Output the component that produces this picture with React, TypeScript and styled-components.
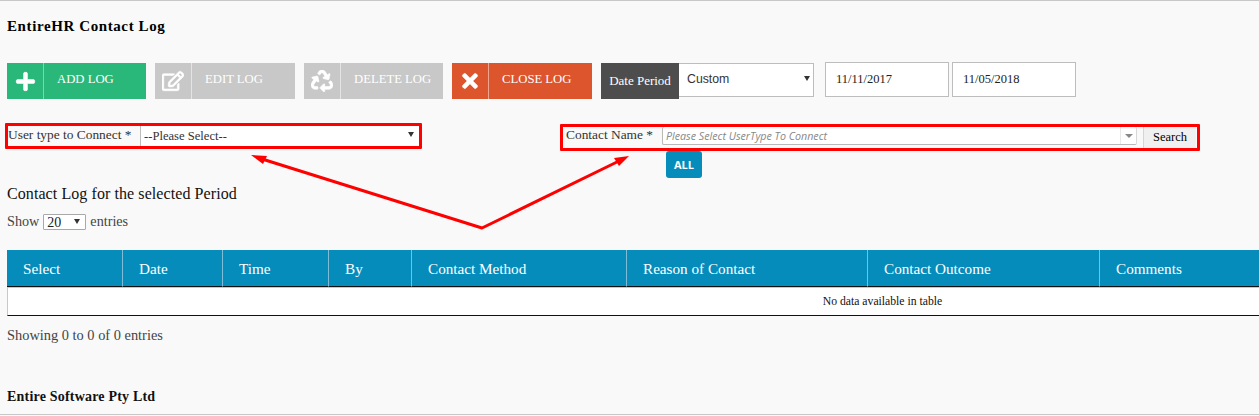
import React from "react";
import styled, { createGlobalStyle } from "styled-components";
import { FaPlus, FaRegEdit, FaRecycle, FaTimes } from "react-icons/fa";

const Global = createGlobalStyle`
  html, body { margin: 0; padding: 0; background: #f9f9f9; }
  body { font-family: "Liberation Serif", "Times New Roman", serif; color: #333; overflow: hidden; }
`;

const Page = styled.div`
  position: relative;
  width: 1259px;
  height: 415px;
  box-sizing: border-box;
  overflow: hidden;
  border-top: 1px solid #c8c8c8;
  border-bottom: 1px solid #c8c8c8;
  padding: 17px 0 0 7px;
`;

const Title = styled.h1`
  margin: 0;
  font-size: 15px;
  line-height: 17px;
  font-weight: bold;
  color: #000;
  letter-spacing: 0.6px;
`;

const Toolbar = styled.div`
  display: flex;
  align-items: flex-start;
  margin-top: 27px;
  height: 37px;
`;

const ActionButton = styled.div<{ $bg: string; $w: number; $line: string; $icon: number }>`
  display: flex;
  width: ${(p) => p.$w}px;
  height: 36px;
  margin-top: 1px;
  margin-right: 9px;
  background: ${(p) => p.$bg};
  color: #fff;
  font-size: 12.7px;
  flex: none;
  > span:first-child {
    width: 36px;
    flex: none;
    display: flex;
    align-items: center;
    justify-content: center;
    border-right: 1px solid ${(p) => p.$line};
    font-size: ${(p) => p.$icon}px;
    svg {
      stroke: currentColor;
      stroke-width: 14;
    }
  }
  > span:last-child {
    padding-left: 13px;
    line-height: 33px;
    white-space: nowrap;
  }
`;

const PeriodLabel = styled.div`
  width: 78px;
  height: 36px;
  margin-top: 1px;
  background: #4d4d4d;
  color: #fff;
  font-size: 13px;
  line-height: 35px;
  text-align: center;
  flex: none;
`;

const Caret = styled.div<{ $right: number; $size: number; $top: number }>`
  position: relative;
  display: flex;
  &::after {
    content: "";
    position: absolute;
    right: ${(p) => p.$right}px;
    top: ${(p) => p.$top}px;
    border-left: ${(p) => p.$size}px solid transparent;
    border-right: ${(p) => p.$size}px solid transparent;
    border-top: ${(p) => p.$size + 2}px solid #333;
    pointer-events: none;
  }
`;

const PeriodCaret = styled(Caret)`
  margin: 1px 11px 0 0;
  flex: none;
`;

const PeriodSelect = styled.select`
  appearance: none;
  width: 135px;
  height: 34px;
  box-sizing: border-box;
  border: 1px solid #bdbdbd;
  border-left: 0;
  border-radius: 0;
  background: #fff;
  padding: 0 0 2px 8px;
  font-family: "Liberation Sans", Arial, sans-serif;
  font-size: 12.3px;
  color: #333;
`;

const DateInput = styled.input`
  width: 124px;
  height: 35px;
  margin-right: 3px;
  box-sizing: border-box;
  border: 1px solid #bdbdbd;
  background: #fff;
  padding: 0 10px;
  font-family: "Liberation Serif", serif;
  font-size: 12.5px;
  color: #222;
  flex: none;
`;

const FilterRow = styled.div`
  display: flex;
  align-items: flex-start;
  margin-top: 24px;
  margin-left: -2px;
`;

const RedBox = styled.div<{ $w: number; $h: number; $ml?: number; $mt?: number }>`
  display: flex;
  align-items: stretch;
  box-sizing: border-box;
  width: ${(p) => p.$w}px;
  height: ${(p) => p.$h}px;
  margin-left: ${(p) => p.$ml ?? 0}px;
  margin-top: ${(p) => p.$mt ?? 0}px;
  border: 3px solid #f00;
  border-radius: 1px;
  flex: none;
`;

const FieldLabel = styled.label<{ $w: number; $pl?: number; $pt?: number }>`
  box-sizing: border-box;
  width: ${(p) => p.$w}px;
  padding-left: ${(p) => p.$pl ?? 0}px;
  padding-top: ${(p) => p.$pt ?? 0}px;
  flex: none;
  font-size: 13.4px;
  line-height: 16px;
  color: #333;
  white-space: nowrap;
`;

const UserCaret = styled(Caret)`
  flex: 1;
  min-width: 0;
`;

const UserTypeSelect = styled.select`
  appearance: none;
  width: 100%;
  height: 20px;
  box-sizing: border-box;
  border: 0;
  border-left: 1px solid #bdbdbd;
  border-radius: 0;
  background: #fff;
  padding: 0 0 0 3px;
  font-family: "Liberation Serif", serif;
  font-size: 12.6px;
  color: #333;
`;

const Combo = styled.div`
  display: flex;
  width: 475px;
  height: 18px;
  margin-right: 6px;
  box-sizing: border-box;
  background: #fff;
  border-left: 1px solid #b8b8b8;
  border-bottom: 1px solid #b8b8b8;
  border-right: 1px solid #d8d8d8;
  border-radius: 2px;
  flex: none;
`;

const ComboText = styled.div`
  flex: 1;
  padding-left: 3px;
  font-family: "Open Sans", sans-serif;
  font-style: italic;
  font-size: 10.7px;
  line-height: 19px;
  color: #888;
`;

const ComboArrow = styled.div`
  width: 15px;
  display: flex;
  align-items: center;
  justify-content: center;
  border-left: 1px solid #e8e8e8;
  &::after {
    content: "";
    border-left: 4px solid transparent;
    border-right: 4px solid transparent;
    border-top: 4px solid #888;
  }
`;

const SearchButton = styled.button`
  width: 53px;
  height: 21px;
  box-sizing: border-box;
  border: 0;
  border-left: 1px solid #d5d5d5;
  background: #f0f0f0;
  padding: 0 0 2px;
  font-family: "Liberation Serif", serif;
  font-size: 12.5px;
  color: #000;
  line-height: 18px;
`;

const AllRow = styled.div`
  margin: 0 0 0 659px;
  height: 27px;
`;

const AllButton = styled.div`
  width: 36px;
  height: 27px;
  background: #068cbb;
  border-radius: 3px;
  color: #fff;
  font-family: "Open Sans", sans-serif;
  font-weight: 700;
  font-size: 11px;
  line-height: 27px;
  text-align: center;
`;

const SectionTitle = styled.h2`
  margin: 7px 0 0;
  font-size: 16px;
  line-height: 17px;
  font-weight: normal;
  color: #111;
  letter-spacing: 0.08px;
`;

const LengthRow = styled.div`
  display: flex;
  align-items: center;
  margin-top: 11px;
  height: 17px;
  font-size: 14.2px;
  color: #444;
`;

const LengthCaret = styled(Caret)`
  margin: 0 4px;
`;

const LengthSelect = styled.select`
  appearance: none;
  width: 43px;
  height: 16px;
  box-sizing: border-box;
  border: 1px solid #a9a9a9;
  border-radius: 1px;
  background: #fff;
  padding: 0 0 0 3px;
  font-family: "Liberation Serif", serif;
  font-size: 14px;
  color: #222;
`;

const Table = styled.table`
  table-layout: fixed;
  border-collapse: separate;
  border-spacing: 0;
  width: 1750px;
  margin-top: 20px;
  background: #fff;
`;

const HeadCell = styled.th`
  height: 37px;
  box-sizing: border-box;
  background: #068cbb;
  color: #fff;
  font-size: 15.2px;
  font-weight: normal;
  text-align: left;
  padding: 1px 0 0 16px;
  border-right: 1px solid #7dbdd7;
  border-bottom: 1px solid #111;
  &:last-child { border-right: 0; }
`;

const EmptyCell = styled.td`
  height: 29px;
  box-sizing: border-box;
  padding: 0;
  text-align: center;
  font-size: 11.7px;
  color: #111;
  border-top: 1px solid #c8c8c8;
  border-bottom: 1px solid #111;
  border-left: 1px solid #c8c8c8;
`;

const Info = styled.div`
  margin-top: 12px;
  font-size: 14.4px;
  line-height: 15px;
  color: #444;
`;

const Footer = styled.div`
  margin-top: 46px;
  font-size: 14px;
  line-height: 15px;
  font-weight: bold;
  color: #111;
  letter-spacing: 0.2px;
`;

const Arrows = styled.svg`
  position: absolute;
  left: 0;
  top: -1px;
  width: 1259px;
  height: 416px;
  pointer-events: none;
`;

const columns: [string, number][] = [
  ["Select", 116],
  ["Date", 100],
  ["Time", 106],
  ["By", 83],
  ["Contact Method", 215],
  ["Reason of Contact", 241],
  ["Contact Outcome", 232],
  ["Comments", 657],
];

const buttons = [
  { label: "ADD LOG", icon: <FaPlus />, bg: "#2ab87a", w: 139, line: "#7dd6ae", size: 21 },
  { label: "EDIT LOG", icon: <FaRegEdit />, bg: "#c8c8c8", w: 140, line: "#e4e4e4", size: 22 },
  { label: "DELETE LOG", icon: <FaRecycle />, bg: "#c8c8c8", w: 139, line: "#e4e4e4", size: 22 },
  { label: "CLOSE LOG", icon: <FaTimes />, bg: "#dc552c", w: 140, line: "#eea68f", size: 22 },
];

export default function App() {
  return (
    <Page>
      <Global />
      <Title>EntireHR Contact Log</Title>
      <Toolbar>
        {buttons.map((b) => (
          <ActionButton key={b.label} $bg={b.bg} $w={b.w} $line={b.line} $icon={b.size}>
            <span>{b.icon}</span>
            <span>{b.label}</span>
          </ActionButton>
        ))}
        <PeriodLabel>Date Period</PeriodLabel>
        <PeriodCaret $right={4} $size={3} $top={13}>
          <PeriodSelect defaultValue="Custom">
            <option>Custom</option>
          </PeriodSelect>
        </PeriodCaret>
        <DateInput defaultValue="11/11/2017" />
        <DateInput defaultValue="11/05/2018" />
      </Toolbar>
      <FilterRow>
        <RedBox $w={417} $h={26}>
          <FieldLabel $w={132} $pt={1}>User type to Connect *</FieldLabel>
          <UserCaret $right={5} $size={3} $top={6}>
            <UserTypeSelect defaultValue="p">
              <option value="p">--Please Select--</option>
            </UserTypeSelect>
          </UserCaret>
        </RedBox>
        <RedBox $w={640} $h={27} $ml={138} $mt={1}>
          <FieldLabel $w={99} $pl={3}>Contact Name *</FieldLabel>
          <Combo>
            <ComboText>Please Select UserType To Connect</ComboText>
            <ComboArrow />
          </Combo>
          <SearchButton>Search</SearchButton>
        </RedBox>
      </FilterRow>
      <AllRow>
        <AllButton>ALL</AllButton>
      </AllRow>
      <SectionTitle>Contact Log for the selected Period</SectionTitle>
      <LengthRow>
        Show
        <LengthCaret $right={6} $size={3} $top={5}>
          <LengthSelect defaultValue="20">
            <option>20</option>
          </LengthSelect>
        </LengthCaret>
        entries
      </LengthRow>
      <Table>
        <colgroup>
          {columns.map(([name, w]) => (
            <col key={name} style={{ width: w }} />
          ))}
        </colgroup>
        <thead>
          <tr>
            {columns.map(([name]) => (
              <HeadCell key={name}>{name}</HeadCell>
            ))}
          </tr>
        </thead>
        <tbody>
          <tr>
            <EmptyCell colSpan={8}>No data available in table</EmptyCell>
          </tr>
        </tbody>
      </Table>
      <Info>Showing 0 to 0 of 0 entries</Info>
      <Footer>Entire Software Pty Ltd</Footer>
      <Arrows viewBox="0 0 1259 416">
        <path d="M262 159 L482 228 L619 161" fill="none" stroke="#f00" strokeWidth="3" strokeLinejoin="round" />
        <polygon points="251,155 267,156 263,164" fill="#f00" />
        <polygon points="629,156 614,158 619,166" fill="#f00" />
      </Arrows>
    </Page>
  );
}
